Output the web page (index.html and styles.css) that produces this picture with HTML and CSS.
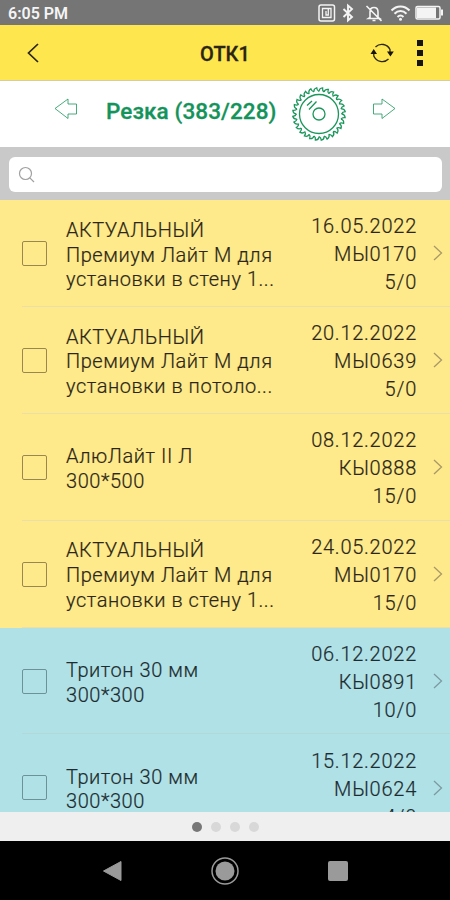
FILE: index.html
```
<!DOCTYPE html>
<html lang="ru">
	<head>
		<meta charset="utf-8">
		<title>ОТК1</title>
		<link rel="stylesheet" href="styles.css">
	</head>
	<body>
		<div class="statusbar">
			<span class="time">6:05 PM</span>
			<svg class="status-icons" width="128" height="20" viewBox="318 3 128 20" fill="none" stroke="#f4f4f4">
				<rect x="319" y="5" width="15.5" height="16" rx="2" stroke-width="1.5"/>
				<path d="M322.500 8.500h8.500v9h-8.500zM326 11v4h2.300v-6" stroke-width="1.300"/>
				<path d="M343.500 9l8.500 8-4 3.500v-15l4 3.500-8.500 8" stroke-width="1.900"/>
				<path d="M370 17.500V12c0-6 8-6 8 0v5.500l1.500 1h-11zM372.500 20.500h3M366.500 6l15 15" stroke-width="1.600"/>
				<path d="M391.500 10.500c5-5.500 13-5.500 18 0M394.500 13.700c3.500-3.700 8.500-3.700 12 0M397.500 17c2-2 4-2 6 0" stroke-width="2"/>
				<circle cx="400.500" cy="19.300" r="1.500" fill="#f4f4f4" stroke="none"/>
				<rect x="416" y="6.500" width="24" height="12.500" rx="1.500" stroke-width="1.500"/>
				<path d="M417 7.500h19v10.500h-19zM441 9.500h2v6h-2z" fill="#f4f4f4" stroke="none"/>
			</svg>
		</div>
		<div class="topnav">
			<svg class="back" width="14" height="22" viewBox="0 0 14 22"><path d="M12 2L2.500 11 12 20" fill="none" stroke="#2b2515" stroke-width="1.700"/></svg>
			<h1>ОТК1</h1>
			<svg class="refresh" width="24" height="24" viewBox="0 0 24 24">
				<path d="M5.500 6a9 9 0 0 1 14.500 2.500v3M18.500 18A9 9 0 0 1 3.800 15v-3" fill="none" stroke="#2b2515" stroke-width="1.300"/>
				<path d="M.5 13l3.200-5 3.300 5zM17 10.500h6.800l-3.400 5z" fill="#17140c"/>
			</svg>
			<div class="menu"><i></i><i></i><i></i></div>
		</div>
		<div class="stage">
			<svg class="arrow-left" width="24" height="22" viewBox="0 0 24 22"><path d="M1 10.500L14 1v5h8.500v10H14v4.500z"/></svg>
			<h2>Резка (383/228)</h2>
			<svg class="saw" width="54" height="54" viewBox="-27 -27 54 54">
				<defs>
					<path id="tooth" d="M0-22.600Q.2-25.800 3.600-26.100Q3.200-23.200 5.030-22.030"/>
					<g id="teeth">
						<use href="#tooth"/>
						<use href="#tooth" transform="rotate(12.857)"/>
						<use href="#tooth" transform="rotate(25.714)"/>
						<use href="#tooth" transform="rotate(38.571)"/>
						<use href="#tooth" transform="rotate(51.429)"/>
						<use href="#tooth" transform="rotate(64.286)"/>
						<use href="#tooth" transform="rotate(77.143)"/>
					</g>
				</defs>
				<use href="#teeth"/>
				<use href="#teeth" transform="rotate(90)"/>
				<use href="#teeth" transform="rotate(180)"/>
				<use href="#teeth" transform="rotate(270)"/>
				<circle r="19.500"/>
				<circle r="6"/>
				<path d="M-12-8.500l5-4.500M-10-4.500l7.500-8"/>
			</svg>
			<svg class="arrow-right" width="24" height="22" viewBox="0 0 24 22"><path d="M23 10.500L10 1v5H1.500v10H10v4.500z"/></svg>
		</div>
		<div class="search">
			<div class="search-box">
				<svg width="18" height="18" viewBox="0 0 18 18"><path d="M11.800 11.800l4.200 4.200" /><circle cx="7.500" cy="7.500" r="6"/></svg>
			</div>
		</div>
		<div class="list">
			<div class="row">
				<span class="check"></span>
				<div class="name">АКТУАЛЬНЫЙ<br>Премиум Лайт М для<br>установки в стену 1...</div>
				<div class="info">16.05.2022<br>МЫ0170<br>5/0</div>
				<svg class="chevron" width="10" height="16" viewBox="0 0 10 16"><path d="M1 1l7.500 7L1 15"/></svg>
			</div>
			<div class="row">
				<span class="check"></span>
				<div class="name">АКТУАЛЬНЫЙ<br>Премиум Лайт М для<br>установки в потоло...</div>
				<div class="info">20.12.2022<br>МЫ0639<br>5/0</div>
				<svg class="chevron" width="10" height="16" viewBox="0 0 10 16"><path d="M1 1l7.500 7L1 15"/></svg>
			</div>
			<div class="row">
				<span class="check"></span>
				<div class="name">АлюЛайт II Л<br>300*500</div>
				<div class="info">08.12.2022<br>КЫ0888<br>15/0</div>
				<svg class="chevron" width="10" height="16" viewBox="0 0 10 16"><path d="M1 1l7.500 7L1 15"/></svg>
			</div>
			<div class="row">
				<span class="check"></span>
				<div class="name">АКТУАЛЬНЫЙ<br>Премиум Лайт М для<br>установки в стену 1...</div>
				<div class="info">24.05.2022<br>МЫ0170<br>15/0</div>
				<svg class="chevron" width="10" height="16" viewBox="0 0 10 16"><path d="M1 1l7.500 7L1 15"/></svg>
			</div>
			<div class="row blue">
				<span class="check"></span>
				<div class="name">Тритон 30 мм<br>300*300</div>
				<div class="info">06.12.2022<br>КЫ0891<br>10/0</div>
				<svg class="chevron" width="10" height="16" viewBox="0 0 10 16"><path d="M1 1l7.500 7L1 15"/></svg>
			</div>
			<div class="row blue">
				<span class="check"></span>
				<div class="name">Тритон 30 мм<br>300*300</div>
				<div class="info">15.12.2022<br>МЫ0624<br>4/0</div>
				<svg class="chevron" width="10" height="16" viewBox="0 0 10 16"><path d="M1 1l7.500 7L1 15"/></svg>
			</div>
		</div>
		<div class="dots"><i class="active"></i><i></i><i></i><i></i></div>
		<div class="navbar">
			<svg width="30" height="30" viewBox="0 0 30 30"><path d="M6.500 15L24 5.500v19z" fill="#9a9a9a" stroke="#9a9a9a" stroke-linejoin="round"/></svg>
			<svg width="30" height="30" viewBox="0 0 30 30"><circle cx="15" cy="15" r="13" fill="none" stroke="#9a9a9a" stroke-width="1.500"/><circle cx="15" cy="15" r="9.500" fill="#9a9a9a"/></svg>
			<svg width="30" height="30" viewBox="0 0 30 30"><rect x="5" y="5" width="20" height="20" rx="2" fill="#9a9a9a"/></svg>
		</div>
	</body>
</html>
```
FILE: styles.css
```
html {
  font-family: Roboto, "Liberation Sans", sans-serif;
}

body {
  margin: 0;
  height: 900px;
  display: flex;
  flex-direction: column;
  overflow: hidden;
}

.statusbar {
  height: 25px;
  flex: none;
  box-sizing: border-box;
  padding: 1px 4px 0 8px;
  display: flex;
  align-items: center;
  justify-content: space-between;
  background-color: #757575;
  color: #f4f4f4;
}

.time {
  font-size: 16px;
  font-weight: 600;
  padding-top: 1px;
}

.topnav {
  height: 56px;
  flex: none;
  box-sizing: border-box;
  display: grid;
  grid-template-columns: 100px 1fr 40px 60px;
  align-items: center;
  background-color: #fee64f;
  border-bottom: 1px solid #d5cda4;
}

.back {
  margin-left: 26px;
}

h1 {
  margin: 0;
  padding-top: 2px;
  font-size: 20px;
  font-weight: 500;
  text-align: center;
  color: #2b2515;
  -webkit-text-stroke: 0.3px #2b2515;
}

.refresh {
  margin-left: 20px;
}

.menu {
  display: flex;
  flex-direction: column;
  gap: 4px;
  margin-left: 27px;
}

.menu i {
  width: 6px;
  height: 6px;
  background-color: #17140c;
}

.stage {
  height: 66px;
  flex: none;
  display: flex;
  align-items: center;
  box-sizing: border-box;
  padding-left: 54px;
  background-color: white;
}

.stage svg {
  flex: none;
  fill: none;
  stroke: #1a965b;
}

.arrow-left,
.arrow-right {
  stroke-width: 0.8;
  margin-bottom: 10px;
}

h2 {
  width: 170px;
  margin: 0 16px 7px 28px;
  font-size: 22.5px;
  font-weight: 500;
  letter-spacing: 0.1px;
  white-space: nowrap;
  color: #14935a;
  -webkit-text-stroke: 0.3px #14935a;
}

.saw {
  stroke-width: 1.3;
}

.arrow-right {
  margin-left: 26px;
}

.search {
  height: 53px;
  flex: none;
  box-sizing: border-box;
  padding: 10px 8px 8px 9px;
  background-color: #c9c9c9;
}

.search-box {
  height: 35px;
  border-radius: 6px;
  background-color: white;
  display: flex;
  align-items: center;
  padding-left: 9px;
}

.search-box svg {
  fill: none;
  stroke: #a0a0a0;
  stroke-width: 1.2;
}

.list {
  flex: 1;
  min-height: 0;
  overflow: hidden;
}

.row {
  height: 106.9px;
  box-sizing: border-box;
  display: flex;
  align-items: center;
  padding: 0 7px 0 22px;
  background: linear-gradient(#ebdfa8, #ebdfa8) 22px 100% / 100% 1px no-repeat #fee98b;
  font-size: 20px;
  font-weight: 300;
  color: #2b2616;
  -webkit-text-stroke: 0.2px;
}

.blue {
  background: linear-gradient(#b3d8d7, #b3d8d7) 22px 100% / 100% 1px no-repeat #b0e1e6;
  color: #1c2c30;
}

.check {
  width: 25px;
  height: 25px;
  flex: none;
  box-sizing: border-box;
  border: 1.5px solid #98884f;
  border-radius: 2px;
}

.blue .check {
  border-color: #6c9298;
}

.name {
  flex: 1;
  margin-left: 19px;
  padding-top: 3px;
  line-height: 24.8px;
  letter-spacing: 0.55px;
  white-space: nowrap;
}

.info {
  padding-top: 2px;
  line-height: 28px;
  letter-spacing: 0.75px;
  text-align: right;
  margin-right: 16px;
}

.chevron {
  flex: none;
  fill: none;
  stroke: #a89a66;
  stroke-width: 1.3;
}

.blue .chevron {
  stroke: #7b9ba0;
}

.dots {
  height: 29px;
  flex: none;
  display: flex;
  align-items: center;
  justify-content: center;
  gap: 9px;
  background-color: #efefef;
}

.dots i {
  width: 10px;
  height: 10px;
  border-radius: 50%;
  background-color: #d8d8d8;
}

.dots .active {
  background-color: #777;
}

.navbar {
  height: 59px;
  flex: none;
  display: flex;
  align-items: center;
  justify-content: center;
  gap: 83px;
  background-color: black;
}
```
